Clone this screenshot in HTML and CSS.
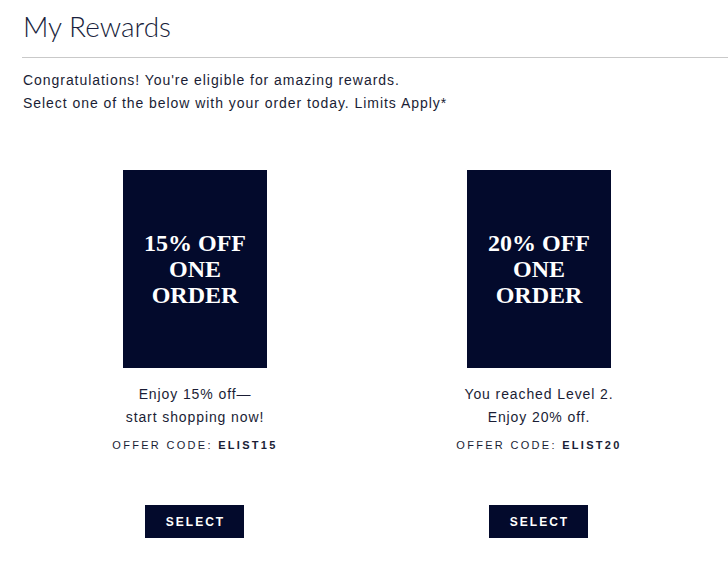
FILE: index.html
```html
<!DOCTYPE html>
<html>
<head>
    <title>My Rewards</title>
    <link rel="stylesheet" href="styles.css">
</head>
<body>
    <div class="page">
        <h1 class="title">My Rewards</h1>
        <div class="rule"></div>
        <div class="intro">
            <p>Congratulations! You're eligible for amazing rewards.</p>
            <p>Select one of the below with your order today. Limits Apply*</p>
        </div>

        <div class="rewards">
            <div class="reward">
                <div class="reward-card">15% OFF<br>ONE<br>ORDER</div>
                <div class="reward-desc">Enjoy 15% off&mdash;<br>start shopping now!</div>
                <div class="reward-code">OFFER CODE: <b>ELIST15</b></div>
                <button type="button" class="select-btn">SELECT</button>
            </div>
            <div class="reward">
                <div class="reward-card">20% OFF<br>ONE<br>ORDER</div>
                <div class="reward-desc">You reached Level 2.<br>Enjoy 20% off.</div>
                <div class="reward-code">OFFER CODE: <b>ELIST20</b></div>
                <button type="button" class="select-btn">SELECT</button>
            </div>
        </div>
    </div>
</body>
</html>
```

FILE: styles.css
```css
body {
    font-family: "Liberation Sans", Arial, sans-serif;
    color: #1a1d35;
    background-color: #fff;
    margin: 0;
    padding: 0;
}
.page {
    padding-left: 23px;
}
.title {
    font-family: Lato, "Open Sans", sans-serif;
    font-weight: 300;
    font-size: 28px;
    line-height: 34px;
    color: #1a1f3d;
    margin: 9px 0 0 0;
}
.rule {
    height: 1px;
    background-color: #c9c9c9;
    margin: 14px 0 0 -1px;
}
.intro {
    margin-top: 11px;
    font-size: 14px;
    line-height: 23px;
    letter-spacing: 0.95px;
}
.intro p {
    margin: 0;
}
.rewards {
    display: grid;
    grid-template-columns: 344px 344px;
    margin-top: 55px;
}
.reward {
    display: flex;
    flex-direction: column;
    align-items: center;
    text-align: center;
}
.reward-card {
    width: 144px;
    height: 198px;
    background-color: #030a2c;
    color: #fff;
    font-family: "Liberation Serif", "Times New Roman", serif;
    font-weight: bold;
    font-size: 24px;
    line-height: 26px;
    display: flex;
    align-items: center;
    justify-content: center;
}
.reward-desc {
    margin-top: 15px;
    font-size: 14px;
    line-height: 23px;
    letter-spacing: 0.9px;
}
.reward-code {
    margin-top: 6px;
    font-size: 11px;
    line-height: 20px;
    letter-spacing: 2.3px;
}
.select-btn {
    margin-top: 50px;
    width: 99px;
    height: 33px;
    background-color: #030a2c;
    color: #fff;
    border: none;
    font-family: "Liberation Sans", Arial, sans-serif;
    font-weight: bold;
    font-size: 12px;
    letter-spacing: 2px;
    padding: 0 0 0 2px;
    margin-left: -1px;
    cursor: pointer;
}
```
